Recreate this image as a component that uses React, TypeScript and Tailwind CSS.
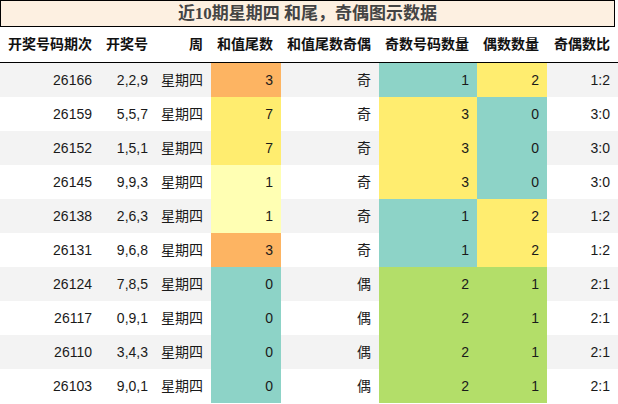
import React from 'react';

type Tone = 'orange' | 'yellow' | 'pale' | 'teal' | 'green';

const toneClass: Record<Tone, string> = {
  orange: 'bg-[#fdb462]',
  yellow: 'bg-[#ffed6f]',
  pale: 'bg-[#ffffb3]',
  teal: 'bg-[#8dd3c7]',
  green: 'bg-[#b3de69]',
};

type Row = {
  issue: string;
  nums: string;
  tail: number;
  tailTone: Tone;
  parity: string;
  odd: number;
  oddTone: Tone;
  even: number;
  evenTone: Tone;
  ratio: string;
};

const rows: Row[] = [
  { issue: '26166', nums: '2,2,9', tail: 3, tailTone: 'orange', parity: '奇', odd: 1, oddTone: 'teal', even: 2, evenTone: 'yellow', ratio: '1:2' },
  { issue: '26159', nums: '5,5,7', tail: 7, tailTone: 'yellow', parity: '奇', odd: 3, oddTone: 'yellow', even: 0, evenTone: 'teal', ratio: '3:0' },
  { issue: '26152', nums: '1,5,1', tail: 7, tailTone: 'yellow', parity: '奇', odd: 3, oddTone: 'yellow', even: 0, evenTone: 'teal', ratio: '3:0' },
  { issue: '26145', nums: '9,9,3', tail: 1, tailTone: 'pale', parity: '奇', odd: 3, oddTone: 'yellow', even: 0, evenTone: 'teal', ratio: '3:0' },
  { issue: '26138', nums: '2,6,3', tail: 1, tailTone: 'pale', parity: '奇', odd: 1, oddTone: 'teal', even: 2, evenTone: 'yellow', ratio: '1:2' },
  { issue: '26131', nums: '9,6,8', tail: 3, tailTone: 'orange', parity: '奇', odd: 1, oddTone: 'teal', even: 2, evenTone: 'yellow', ratio: '1:2' },
  { issue: '26124', nums: '7,8,5', tail: 0, tailTone: 'teal', parity: '偶', odd: 2, oddTone: 'green', even: 1, evenTone: 'green', ratio: '2:1' },
  { issue: '26117', nums: '0,9,1', tail: 0, tailTone: 'teal', parity: '偶', odd: 2, oddTone: 'green', even: 1, evenTone: 'green', ratio: '2:1' },
  { issue: '26110', nums: '3,4,3', tail: 0, tailTone: 'teal', parity: '偶', odd: 2, oddTone: 'green', even: 1, evenTone: 'green', ratio: '2:1' },
  { issue: '26103', nums: '9,0,1', tail: 0, tailTone: 'teal', parity: '偶', odd: 2, oddTone: 'green', even: 1, evenTone: 'green', ratio: '2:1' },
];

const headers = ['开奖号码期次', '开奖号', '周', '和值尾数', '和值尾数奇偶', '奇数号码数量', '偶数数量', '奇偶数比'];

const cols = 'grid grid-cols-[100px_56px_55px_70px_98px_98px_70px_71px]';
const cell = 'flex items-center justify-end pr-2';

export default function App() {
  return (
    <div className="w-[618px] h-[404px] overflow-hidden bg-white text-[14px] text-[#1a1a1a] font-['Liberation_Sans','Noto_Sans_CJK_SC',sans-serif]">
      {/* Title */}
      <div className="w-[615px] h-[27px] border border-black bg-[#fdf0e1] flex items-center justify-center">
        <span className="text-[17px] font-bold text-[#444] font-['Liberation_Serif','Noto_Sans_CJK_SC',serif]">
          近10期星期四 和尾，奇偶图示数据
        </span>
      </div>

      {/* Header */}
      <div className={`${cols} h-[36px] border-b border-black font-bold text-[#111]`}>
        {headers.map((h) => (
          <div key={h} className={cell}>
            {h}
          </div>
        ))}
      </div>

      {/* Body */}
      {rows.map((r, i) => (
        <div key={r.issue} className={`${cols} h-[34px] ${i % 2 === 0 ? 'bg-[#f3f3f3]' : 'bg-white'}`}>
          <div className={cell}>{r.issue}</div>
          <div className={cell}>{r.nums}</div>
          <div className={cell}>星期四</div>
          <div className={`${cell} ${toneClass[r.tailTone]}`}>{r.tail}</div>
          <div className={cell}>{r.parity}</div>
          <div className={`${cell} ${toneClass[r.oddTone]}`}>{r.odd}</div>
          <div className={`${cell} ${toneClass[r.evenTone]}`}>{r.even}</div>
          <div className={cell}>{r.ratio}</div>
        </div>
      ))}
    </div>
  );
}
